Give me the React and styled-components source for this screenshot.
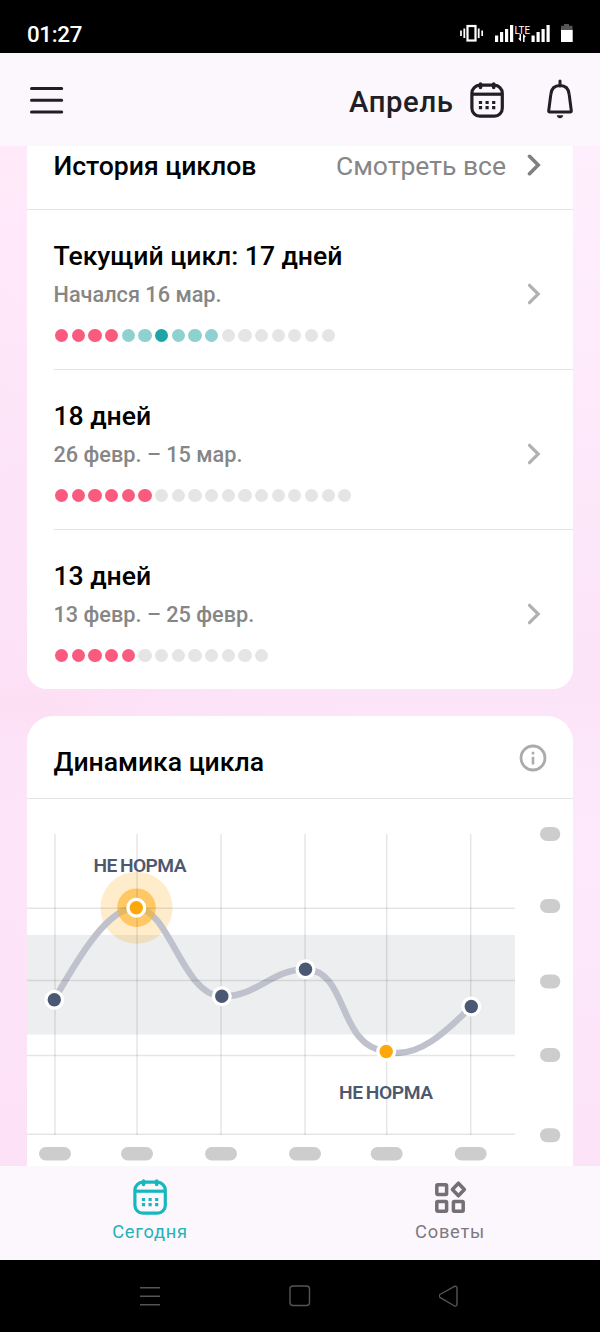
import React from 'react';
import styled, { createGlobalStyle } from 'styled-components';

const GlobalStyle = createGlobalStyle`
  * {
    box-sizing: border-box;
  }

  body {
    margin: 0;
    background: #000;
    font-family: Roboto, "Liberation Sans", sans-serif;
  }

  svg {
    display: block;
    flex: none;
  }
`;

const Screen = styled.div`
  width: 600px;
  height: 1332px;
  display: flex;
  flex-direction: column;
  overflow: hidden;
  background: #000;
`;

const StatusBar = styled.div`
  height: 53px;
  flex: none;
  display: flex;
  justify-content: space-between;
  padding: 20px 26px 0 27px;
  color: #fff;
`;

const Clock = styled.div`
  font-size: 22.3px;
  font-weight: 500;
  line-height: 28px;
  letter-spacing: -0.3px;
`;

const AppBar = styled.header`
  height: 93px;
  flex: none;
  display: flex;
  align-items: center;
  padding: 0 26px 0 30px;
  background: #fbf7fd;
  color: #221e26;
`;

const Month = styled.div`
  margin-left: auto;
  margin-right: 15.5px;
  padding-top: 4px;
  font-size: 29.3px;
  font-weight: 500;
  line-height: 34px;
  letter-spacing: 0.6px;
`;

const BellSlot = styled.div`
  margin-left: 41px;
  padding-bottom: 2px;
`;

const Content = styled.main`
  height: 1020px;
  flex: none;
  overflow: hidden;
  display: flex;
  flex-direction: column;
  gap: 27px;
  padding: 0 27px;
  background:
    radial-gradient(ellipse 130px 34px at 40px 560px, rgba(252, 216, 236, 0.4), transparent),
    linear-gradient(90deg, rgba(255, 218, 242, 0.25), transparent 60%),
    linear-gradient(180deg, #ffeffd 0%, #fdeafb 22%, #fce4f8 52%, #fde9fc 68%, #fce3f8 100%);
`;

const Card = styled.section`
  flex: none;
  background: #fff;
  border-radius: ${props => (props.$cut ? '0 0 20px 20px' : '26px 26px 0 0')};
  overflow: hidden;
`;

const CardHeader = styled.div`
  display: flex;
  align-items: ${props => (props.$cut ? 'flex-start' : 'center')};
  height: ${props => (props.$cut ? 64 : 83)}px;
  padding: ${props => (props.$cut ? 4 : 9)}px 26px 0 26.5px;
  border-bottom: 1px solid #e4e4e4;
`;

const Title = styled.h2`
  margin: 0;
  font-size: 26.6px;
  font-weight: 500;
  line-height: 32px;
  letter-spacing: -0.03px;
  color: #000;
`;

const SeeAll = styled.div`
  display: flex;
  align-items: center;
  gap: 21px;
  margin-left: auto;
  padding-right: 6px;
  font-size: 26.5px;
  line-height: 32px;
  color: #868686;
`;

const HeaderChevron = styled.div`
  padding-bottom: 2px;
`;

const Row = styled.div`
  display: flex;
  align-items: center;
  height: ${props => (props.$last ? 159 : 160)}px;
  margin-left: 26.5px;
  padding-right: 32px;
  border-bottom: ${props => (props.$last ? 'none' : '1px solid #e4e4e4')};
`;

const RowBody = styled.div`
  flex: 1;
  align-self: flex-start;
  padding-top: 30px;
`;

const RowChevron = styled.div`
  padding-top: 9px;
`;

const Period = styled.div`
  margin-top: 10px;
  font-size: 21.7px;
  font-weight: 500;
  line-height: 26px;
  color: #868686;
`;

const Dots = styled.div`
  display: flex;
  gap: 3.37px;
  margin: 21px 0 0 1.5px;
`;

const dotColors = {
  period: '#fb5a7f',
  fertile: '#8fd1d1',
  ovulation: '#1fa3a6',
  plain: '#e5e5e5',
};

const Dot = styled.span`
  width: 13.3px;
  height: 13.3px;
  border-radius: 50%;
  background: ${props => dotColors[props.$kind]};
`;

const InfoSlot = styled.div`
  margin-left: auto;
  padding-bottom: 7px;
`;

const ChartLabel = styled.text`
  font-size: 19.2px;
  font-weight: 600;
  word-spacing: -1px;
  fill: #4d586f;
`;

const TabBar = styled.nav`
  height: 93.5px;
  flex: none;
  display: flex;
  background: #fbf7fd;
`;

const Tab = styled.div`
  flex: 1;
  display: flex;
  flex-direction: column;
  align-items: center;
  padding-top: 12px;
  font-size: 18.3px;
  line-height: 22px;
  letter-spacing: 0.75px;
  color: ${props => (props.$active ? '#22b3b8' : '#7d797f')};
`;

const TabLabel = styled.span`
  margin-top: 5px;
`;

const SystemNav = styled.div`
  height: 72.5px;
  flex: none;
  display: flex;
  align-items: center;
  justify-content: center;
  gap: 128px;
`;

const CalendarIcon = ({ color }) => (
  <svg width="36" height="38" viewBox="0 0.8 36 38" fill="none" stroke={color} strokeWidth="3.2">
    <rect x="2.9" y="5" width="30.4" height="31" rx="8" />
    <path d="M2.9 14H33.3" />
    <path d="M11.5 3.8V7.2M24.7 3.8V7.2" strokeLinecap="round" strokeWidth="3.6" />
    <path d="M9.9 22.3h3.2M16.5 22.3h3.2M23.1 22.3h3.2M9.9 27.4h3.2M16.5 27.4h3.2M23.1 27.4h3.2" strokeWidth="3.2" />
  </svg>
);

const BellIcon = () => (
  <svg width="28" height="40" viewBox="0 0 28 40" fill="none" stroke="#221e26" strokeWidth="3" strokeLinejoin="round">
    <path d="M14 2V7" strokeLinecap="round" />
    <path d="M14 6.5C8.6 6.5 5.3 10 4.8 15.5L2.7 31.8Q2.6 33 3.8 33H24.2Q25.4 33 25.3 31.8L23.2 15.5C22.7 10 19.4 6.5 14 6.5Z" />
    <path d="M10.7 36.3H17.3C16.8 38.1 15.6 39.2 14 39.2S11.2 38.1 10.7 36.3Z" fill="#221e26" stroke="none" />
  </svg>
);

const Chevron = ({ color, width = 3.2 }) => (
  <svg width="14" height="22" viewBox="0 0 14 22" fill="none" stroke={color} strokeWidth={width}>
    <path d="M2.5 2.3L11.2 11L2.5 19.7" strokeLinecap="round" />
  </svg>
);

const InfoIcon = () => (
  <svg width="28" height="28" viewBox="0 0 28 28" fill="none" stroke="#ababab">
    <circle cx="14" cy="14" r="12" strokeWidth="2.8" />
    <path d="M14 12.8V20.5M14 7.8V10.4" strokeWidth="2.6" />
  </svg>
);

const StatusIcons = () => (
  <svg width="114" height="22" viewBox="0 0 114 22">
    <g fill="none" stroke="#fff">
      <rect x="7.5" y="6" width="8" height="14.5" strokeWidth="2.2" />
      <path d="M4.3 8.5V18M18.7 8.5V18" strokeWidth="1.8" />
      <path d="M1 10.5V16M22.2 10.5V16" strokeWidth="1.7" />
    </g>
    <path
      fill="#fff"
      d="M35 15.5h3.2V22H35zM40 12h3.2v10H40zM45 9h3.2v13H45zM50 5h3.2v17H50zM71.5 15.5h3.2V22h-3.2zM76.5 12h3.2v10h-3.2zM81.5 9h3.2v13h-3.2zM86.5 5h3.2v17h-3.2z"
    />
    <text x="54.6" y="13.5" fill="#fff" fontSize="10.5" textLength="15.6" lengthAdjust="spacingAndGlyphs">LTE</text>
    <path d="M60.3 14V19.8L58.8 18.3M63.8 22V15.5L65.3 17" fill="none" stroke="#fff" strokeWidth="1.5" />
    <path d="M104 4h5v1.8h3.5V10H101V5.8h3z" fill="#555" />
    <path d="M101 10h11.7v12H101z" fill="#fff" />
  </svg>
);

const TipsIcon = () => (
  <svg width="36" height="38" viewBox="-1 -2 36 38" fill="none" stroke="#737075" strokeWidth="3.5" strokeLinejoin="round">
    <rect x="3.8" y="4.8" width="9.8" height="9.8" rx="1" />
    <rect x="3.8" y="21.4" width="9.8" height="9.8" rx="1" />
    <rect x="20.4" y="21.4" width="9.8" height="9.8" rx="1" />
    <path d="M25.4 3.2L31.4 9.5L25.4 15.8L19.4 9.5Z" />
  </svg>
);

const verticals = [28, 110, 194, 278, 359.7, 443.7];
const horizontals = [109.3, 181.5, 256.5, 335.3];
const scale = [35, 107, 182.5, 256, 336.3];

const points = [
  { x: 27.3, y: 200.7 },
  { x: 109.3, y: 108.7, alert: true },
  { x: 194.8, y: 197.2 },
  { x: 278.5, y: 170.3 },
  { x: 359.2, y: 252.5, alert: true },
  { x: 444.3, y: 207.5 },
];

const CycleChart = () => (
  <svg width="546" height="367" viewBox="0 0 546 367">
    <rect x="0" y="136" width="488" height="99.5" fill="#eceef0" />
    <circle cx="109.5" cy="108.7" r="36" fill="#ffb121" fillOpacity="0.24" />
    <path
      d="M27.3 200.7C55 152 82 108.7 109.3 108.7C142 109 156 197 194.8 197.2C228 199 245 170.3 278.5 170.3C322 172 310 247 359.2 252.5C390 261 420 232 444.3 207.5"
      fill="none"
      stroke="#bfc2cc"
      strokeWidth="6.4"
    />
    <circle cx="109.5" cy="108.7" r="19.3" fill="#ffb121" fillOpacity="0.6" />
    <g stroke="#000" strokeOpacity="0.1" strokeWidth="1.5">
      {verticals.map(x => (
        <line key={x} x1={x} x2={x} y1="35" y2="336" />
      ))}
      {horizontals.map(y => (
        <line key={y} x1="0" x2="488" y1={y} y2={y} />
      ))}
    </g>
    {points.map(p => (
      <g key={p.x}>
        <circle cx={p.x} cy={p.y} r="10" fill="#fff" />
        <circle cx={p.x} cy={p.y} r="6.7" fill={p.alert ? '#fca80a' : '#4b5874'} />
      </g>
    ))}
    <ChartLabel x="66.5" y="73.3" textLength="93">НЕ НОРМА</ChartLabel>
    <ChartLabel x="312" y="299.8" textLength="94">НЕ НОРМА</ChartLabel>
    <g fill="#cdcdcd">
      {scale.map(y => (
        <rect key={y} x="513" y={y - 7} width="20.3" height="14" rx="7" />
      ))}
      {verticals.map(x => (
        <rect key={x} x={x - 16} y="348" width="32" height="13.6" rx="6.8" />
      ))}
    </g>
  </svg>
);

const fill = (kind, count) => Array(count).fill(kind);

const cycles = [
  {
    title: 'Текущий цикл: 17 дней',
    period: 'Начался 16 мар.',
    days: [
      ...fill('period', 4),
      ...fill('fertile', 2),
      'ovulation',
      ...fill('fertile', 3),
      ...fill('plain', 7),
    ],
  },
  {
    title: '18 дней',
    period: '26 февр. – 15 мар.',
    days: [...fill('period', 6), ...fill('plain', 12)],
  },
  {
    title: '13 дней',
    period: '13 февр. – 25 февр.',
    days: [...fill('period', 5), ...fill('plain', 8)],
  },
];

export default class App extends React.Component {
  render() {
    return (
      <Screen>
        <GlobalStyle />
        <StatusBar>
          <Clock>01:27</Clock>
          <StatusIcons />
        </StatusBar>
        <AppBar>
          <svg width="34" height="30" viewBox="0 0 34 30" stroke="#221e26" strokeWidth="3" strokeLinecap="round">
            <path d="M1.5 3.5H31.7M1.5 15.2H31.7M1.5 26.9H31.7" />
          </svg>
          <Month>Апрель</Month>
          <CalendarIcon color="#221e26" />
          <BellSlot>
            <BellIcon />
          </BellSlot>
        </AppBar>
        <Content>
          <Card $cut>
            <CardHeader $cut>
              <Title>История циклов</Title>
              <SeeAll>
                Смотреть все
                <HeaderChevron>
                  <Chevron color="#808080" width={3.6} />
                </HeaderChevron>
              </SeeAll>
            </CardHeader>
            {cycles.map((cycle, i) => (
              <Row key={cycle.title} $last={i === cycles.length - 1}>
                <RowBody>
                  <Title>{cycle.title}</Title>
                  <Period>{cycle.period}</Period>
                  <Dots>
                    {cycle.days.map((kind, day) => (
                      <Dot key={day} $kind={kind} />
                    ))}
                  </Dots>
                </RowBody>
                <RowChevron>
                  <Chevron color="#b0b0b0" />
                </RowChevron>
              </Row>
            ))}
          </Card>
          <Card>
            <CardHeader>
              <Title>Динамика цикла</Title>
              <InfoSlot>
                <InfoIcon />
              </InfoSlot>
            </CardHeader>
            <CycleChart />
          </Card>
        </Content>
        <TabBar>
          <Tab $active>
            <CalendarIcon color="#16b8be" />
            <TabLabel>Сегодня</TabLabel>
          </Tab>
          <Tab>
            <TipsIcon />
            <TabLabel>Советы</TabLabel>
          </Tab>
        </TabBar>
        <SystemNav>
          <svg width="22" height="22" viewBox="0 0 22 22" stroke="#555" strokeWidth="1.4">
            <path d="M1 2.7H21M1 11.2H21M1 19.7H21" />
          </svg>
          <svg width="22" height="22" viewBox="0 0 22 22" fill="none" stroke="#555" strokeWidth="1.4">
            <rect x="1" y="1" width="19.5" height="19.5" rx="3" />
          </svg>
          <svg width="22" height="22" viewBox="0 0 22 22" fill="none" stroke="#555" strokeWidth="1.4" strokeLinejoin="round">
            <path d="M15.5 1.3L0.9 9.5Q-0.4 11 0.9 12.3L15.5 21Q18 21.5 18 19V3.2Q18 0.8 15.5 1.3Z" />
          </svg>
        </SystemNav>
      </Screen>
    );
  }
}
